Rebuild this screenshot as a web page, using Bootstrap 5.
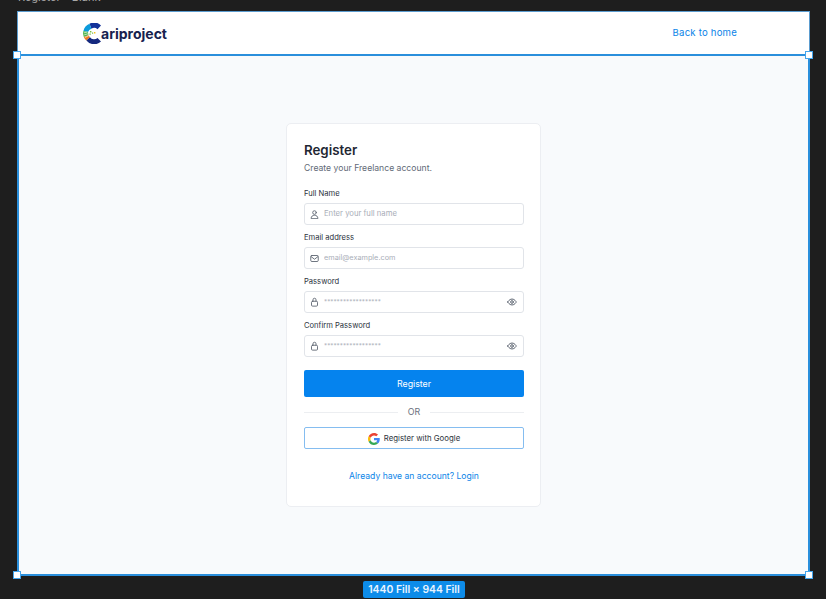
<!DOCTYPE html>
<html lang="en">
<head>
    <meta charset="UTF-8">
    <meta name="viewport" content="width=device-width, initial-scale=1.0">
    <title>Register - Blank</title>
    <link href="https://cdn.jsdelivr.net/npm/bootstrap@5.3.0/dist/css/bootstrap.min.css" rel="stylesheet">
    <style>
        html, body { height: 100%; }
        body { background: #1e1e1e; font-family: Inter, "Liberation Sans", sans-serif; overflow: hidden; }
        .frame-title { height: 11px; padding-left: 18px; font-size: 11px; line-height: 11px; color: #a8a8a8; overflow: hidden; }
        .frame-title span { display: block; margin-top: -8px; }
        .frame-wrap { width: 793px; margin-left: 17px; position: relative; }
        .site-head { height: 43px; background: #fff; padding: 1px 72px 0 65px; border: 1px solid #5b9ccf; border-bottom: 0; }
        .brand-name { font-size: 14px; font-weight: 700; color: #17224f; margin-left: -1px; }
        .back-link { font-size: 9.6px; color: #0a84e8; letter-spacing: .2px; text-decoration: none; }
        .page-area { height: 522px; background: #f8fafc; border: 2px solid #2a8fdc; padding-top: 67px; }
        .reg-card { width: 255px; height: 384px; background: #fff; border: 1px solid #eceef2; border-radius: 5px; padding: 17px 16px 17px 17px; }
        .reg-title { font-size: 13.3px; font-weight: 600; color: #1f2733; line-height: 18px; margin: 0 0 3px; }
        .reg-sub { font-size: 8.65px; color: #626a77; line-height: 12px; margin: 0 0 15px; }
        .field-label { display: block; font-size: 7.6px; color: #2b323d; line-height: 10px; margin-bottom: 4px; }
        .field-box { height: 22px; border: 1px solid #e1e4e9; border-radius: 3px; background: #fff; padding: 0 6px 0 5px; margin-bottom: 8px; gap: 5px; }
        .field-box svg { flex: none; stroke: #5f6773; fill: none; stroke-width: 1.2; stroke-linecap: round; stroke-linejoin: round; }
        .field-box .form-control { font-size: 7.7px; color: #333; padding: 0; height: 20px; line-height: 20px; background: transparent; }
        .field-box .form-control:focus { box-shadow: none; }
        .field-box .form-control::placeholder { color: #a9aeb8; opacity: 1; }
        .field-box .ph-email { font-size: 7.3px; }
        .field-box .ph-stars { font-size: 6.3px; }
        .btn-reg { display: block; width: 100%; height: 27px; margin-top: 13px; padding: 0; background: #0583ee; border: 0; border-radius: 2px; color: #fff; font-size: 8.8px; }
        .or-line { gap: 10px; height: 10px; margin: 10px 0 10px; font-size: 8.8px; line-height: 10px; color: #6a717d; }
        .or-line::before, .or-line::after { content: ""; flex: 1; height: 1px; background: #eceef1; }
        .btn-google { height: 22px; width: 100%; padding: 1px 0 0; background: #fff; border: 1px solid #85bdf0; border-radius: 2px; color: #2e3540; font-size: 7.8px; gap: 4px; }
        .login-link { display: block; text-align: center; font-size: 8.6px; line-height: 12px; margin-top: 21px; color: #0a84e8; text-decoration: none; }
        .sel-dot { position: absolute; width: 8px; height: 8px; background: #fff; border: 1.5px solid #45a5ec; }
        .size-tag { width: 102px; height: 17px; margin: 5px 0 0 363px; background: #0d8ce9; border-radius: 2px; color: #e8f4ff; font-size: 10.4px; font-weight: 600; line-height: 17px; text-align: center; }
    </style>
</head>
<body>
<div class="frame-title"><span>Register - Blank</span></div>
<div class="frame-wrap">
    <header class="site-head d-flex align-items-center justify-content-between">
        <a class="d-flex align-items-center text-decoration-none" href="#">
            <svg width="19" height="21" viewBox="0 0 19 21">
                <path d="M18 2.400A10 10 0 0 0 6.500 .8L8.400 5.800A5 5 0 0 1 14.500 6.200Z" fill="#12329a"/>
                <path d="M6.500 .8A10.300 10.300 0 0 0 .4 8L5 9A5 5 0 0 1 8.400 5.800Z" fill="#0c9bdc"/>
                <path d="M.4 8A10.500 10.500 0 0 0 .8 14L5.400 12.200 5 9Z" fill="#4fb54a"/>
                <path d="M.8 14A10 10 0 0 0 3.400 17.500L7 14.200 5.400 12.200Z" fill="#ee7a1f"/>
                <path d="M3.400 17.500A10 10 0 0 0 18 18.600L14.500 15A5 5 0 0 1 7 14.200Z" fill="#15297f"/>
                <path d="M1 9.800l3.600-.8M1.200 11.800l3.800-1M2 14.400l3.600-1.600" stroke="#fff" stroke-width=".6" fill="none"/>
                <path d="M7 8h1.400v1.400H7zM6.400 10.400h1.400v1.400H6.400zM9 9.600h1.200v1.200H9z" fill="#7cc242"/>
                <path d="M11 9h1.400v1.400H11z" fill="#f6c21c"/>
            </svg>
            <span class="brand-name">ariproject</span>
        </a>
        <a class="back-link" href="#">Back to home</a>
    </header>
    <main class="page-area d-flex justify-content-center align-items-start">
        <form class="reg-card">
            <h1 class="reg-title">Register</h1>
            <p class="reg-sub">Create your Freelance account.</p>

            <label class="field-label">Full Name</label>
            <div class="field-box d-flex align-items-center">
                <svg width="9" height="9" viewBox="0 0 12 12"><circle cx="6" cy="3.400" r="2.400"/><path d="M1.500 11c0-2.600 2-4 4.500-4s4.500 1.400 4.500 4z"/></svg>
                <input class="form-control border-0" type="text" placeholder="Enter your full name">
            </div>

            <label class="field-label">Email address</label>
            <div class="field-box d-flex align-items-center">
                <svg width="9" height="9" viewBox="0 0 12 12"><rect x="1" y="2" width="10" height="8" rx="1.500"/><path d="M1.500 3.500 6 7l4.500-3.500"/></svg>
                <input class="form-control border-0 ph-email" type="email" placeholder="email@example.com">
            </div>

            <label class="field-label">Password</label>
            <div class="field-box d-flex align-items-center">
                <svg width="9" height="10" viewBox="0 0 12 13"><rect x="2" y="5.500" width="8" height="6.500" rx="1.400"/><path d="M4 5.500V3.500a2 2 0 0 1 4 0v2"/></svg>
                <input class="form-control border-0 ph-stars" type="text" placeholder="******************">
                <svg width="10" height="10" viewBox="0 0 12 12"><path d="M.8 6S2.800 2.400 6 2.400 11.200 6 11.200 6 9.200 9.600 6 9.600.8 6 .8 6z"/><circle cx="6" cy="6" r="1.600"/></svg>
            </div>

            <label class="field-label">Confirm Password</label>
            <div class="field-box d-flex align-items-center">
                <svg width="9" height="10" viewBox="0 0 12 13"><rect x="2" y="5.500" width="8" height="6.500" rx="1.400"/><path d="M4 5.500V3.500a2 2 0 0 1 4 0v2"/></svg>
                <input class="form-control border-0 ph-stars" type="text" placeholder="******************">
                <svg width="10" height="10" viewBox="0 0 12 12"><path d="M.8 6S2.800 2.400 6 2.400 11.200 6 11.200 6 9.200 9.600 6 9.600.8 6 .8 6z"/><circle cx="6" cy="6" r="1.600"/></svg>
            </div>

            <button class="btn btn-reg" type="button">Register</button>
            <div class="or-line d-flex align-items-center">OR</div>
            <button class="btn btn-google d-flex align-items-center justify-content-center" type="button">
                <svg width="12" height="12" viewBox="0 0 48 48">
                    <path fill="#EA4335" d="M24 9.500c3.500 0 6.700 1.200 9.200 3.600l6.900-6.900C35.900 2.400 30.500 0 24 0 14.600 0 6.500 5.400 2.600 13.200l8 6.200C12.500 13.700 17.800 9.500 24 9.500z"/>
                    <path fill="#4285F4" d="M47 24.500c0-1.600-.1-3.100-.4-4.500H24v9h12.900c-.6 3-2.200 5.500-4.700 7.200l7.700 6c4.500-4.200 7.100-10.300 7.100-17.700z"/>
                    <path fill="#FBBC05" d="M10.500 28.600c-.5-1.400-.8-3-.8-4.600s.3-3.200.8-4.600l-8-6.200C.9 16.500 0 20.100 0 24s.9 7.500 2.600 10.800z"/>
                    <path fill="#34A853" d="M24 48c6.500 0 11.900-2.100 15.900-5.800l-7.700-6c-2.200 1.400-4.900 2.300-8.200 2.300-6.200 0-11.500-4.200-13.400-9.900l-8 6.200C6.500 42.600 14.600 48 24 48z"/>
                </svg>
                Register with Google
            </button>
            <a class="login-link" href="#">Already have an account? Login</a>
        </form>
    </main>
    <span class="sel-dot" style="left:-4px;top:40px"></span>
    <span class="sel-dot" style="right:-3px;top:40px"></span>
    <span class="sel-dot" style="left:-4px;bottom:-3px"></span>
    <span class="sel-dot" style="right:-3px;bottom:-3px"></span>
</div>
<div class="size-tag">1440 Fill × 944 Fill</div>
<script src="https://cdn.jsdelivr.net/npm/bootstrap@5.3.0/dist/js/bootstrap.bundle.min.js"></script>
</body>
</html>
